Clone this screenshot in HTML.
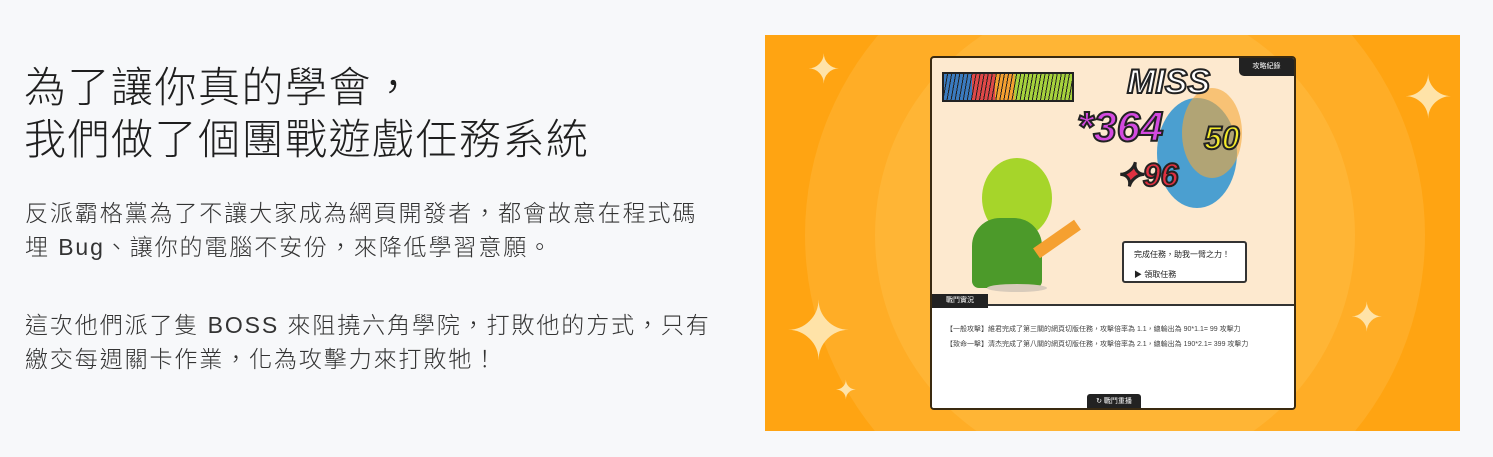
<!DOCTYPE html><html><head><meta charset="utf-8"><style>
html,body{overflow:hidden}
body{margin:0;width:1493px;height:457px;background:#f7f8fa;font-family:"Liberation Sans","Noto Sans CJK TC",sans-serif;color:#222;position:relative}
h1{position:absolute;left:24px;top:62px;margin:0;font-weight:300;font-size:42px;line-height:52px;letter-spacing:1.5px;color:#1e1e1e;white-space:nowrap}
p{position:absolute;left:25px;margin:0;font-size:23px;line-height:34px;color:#333;width:720px;letter-spacing:1.9px;white-space:nowrap;font-weight:300}
.panel{position:absolute;left:765px;top:35px;width:695px;height:396px;background:#ffa412;overflow:hidden}
.c{position:absolute;border-radius:50%}
.win{position:absolute;left:930px;top:56px;width:362px;height:350px;border:2px solid #3a2a10;border-radius:4px;background:#fde9cf;overflow:hidden}
.log{position:absolute;left:0;top:246px;width:100%;height:104px;background:#fff;border-top:2px solid #333;font-size:7px;color:#444}
.star{position:absolute;color:#ffe3a8;font-size:40px}
</style></head><body>
<h1>為了讓你真的學會，<br>我們做了個團戰遊戲任務系統</h1>
<p style="top:196px">反派霸格黨為了不讓大家成為網頁開發者，都會故意在程式碼<br>埋 Bug、讓你的電腦不安份，來降低學習意願。</p>
<p style="top:308px">這次他們派了隻 BOSS 來阻撓六角學院，打敗他的方式，只有<br>繳交每週關卡作業，化為攻擊力來打敗牠！</p>
<div class="panel">
<div class="c" style="left:40px;top:-110px;width:620px;height:620px;background:#ffad26"></div>
<div class="c" style="left:110px;top:-40px;width:480px;height:480px;background:#ffb535"></div>
<div class="star" style="left:42px;top:12px">✦</div>
<div class="star" style="left:638px;top:28px;font-size:60px">✦</div>
<div class="star" style="left:20px;top:250px;font-size:80px">✦</div>
<div class="star" style="left:585px;top:260px">✦</div>
<div class="star" style="left:70px;top:340px;font-size:26px">✦</div>
</div>
<div class="win">
<div style="position:absolute;left:10px;top:14px;width:128px;height:26px;background:repeating-linear-gradient(100deg,transparent 0 3px,#222 3px 4px),linear-gradient(90deg,#3a7bbf 0 22%,#e04848 22% 40%,#f5a030 40% 55%,#a6d23c 55%);border:2px solid #222"></div>
<div class="c" style="left:225px;top:40px;width:80px;height:110px;background:#4b9fd0"></div>
<div class="c" style="left:250px;top:30px;width:60px;height:90px;background:#f5a838;opacity:.6"></div>
<div style="position:absolute;left:195px;top:5px;font:italic 900 34px 'Liberation Sans';color:#fff;-webkit-text-stroke:2px #222">MISS</div>
<div style="position:absolute;left:145px;top:45px;font:italic 900 42px 'Liberation Sans';color:#d44ae0;-webkit-text-stroke:2px #222">*364</div>
<div style="position:absolute;left:272px;top:62px;font:italic 900 32px 'Liberation Sans';color:#f3ea2a;-webkit-text-stroke:2px #222">50</div>
<div style="position:absolute;left:184px;top:98px;font:italic 900 32px 'Liberation Sans';color:#e03040;-webkit-text-stroke:2px #222">✦96</div>
<div class="c" style="left:50px;top:100px;width:70px;height:80px;background:#a6d52a"></div>
<div style="position:absolute;left:40px;top:160px;width:70px;height:70px;background:#4c9a2a;border-radius:40% 40% 10% 10%"></div>
<div style="position:absolute;left:100px;top:175px;width:50px;height:12px;background:#f5a030;transform:rotate(-35deg)"></div>
<div class="c" style="left:55px;top:226px;width:60px;height:8px;background:#d8cbbb"></div>
<div style="position:absolute;left:190px;top:183px;width:125px;height:42px;background:#fff;border:2px solid #333;border-radius:3px;font-size:8px;padding:6px 10px;box-sizing:border-box">完成任務，助我一臂之力！<br><br>▶ 領取任務</div>
<div style="position:absolute;right:0;top:0;width:55px;height:18px;background:#222;color:#fff;font-size:7px;line-height:18px;text-align:center;border-radius:0 0 0 5px">攻略紀錄</div>
<div class="log"><div style="position:absolute;left:0;top:-12px;width:56px;height:14px;background:#222;color:#fff;font-size:7px;line-height:14px;text-align:center">戰鬥實況</div>
<div style="padding:16px 0 0 14px;line-height:15px">【一般攻擊】維君完成了第三關的網頁切版任務，攻擊倍率為 1.1，總輸出為 90*1.1= 99 攻擊力<br>【致命一擊】清杰完成了第八關的網頁切版任務，攻擊倍率為 2.1，總輸出為 190*2.1= 399 攻擊力</div>
<div style="position:absolute;left:155px;bottom:0;width:54px;height:16px;background:#222;color:#fff;font-size:7px;line-height:16px;text-align:center;border-radius:3px 3px 0 0">↻ 戰鬥重播</div></div>
</div>
</body></html>
